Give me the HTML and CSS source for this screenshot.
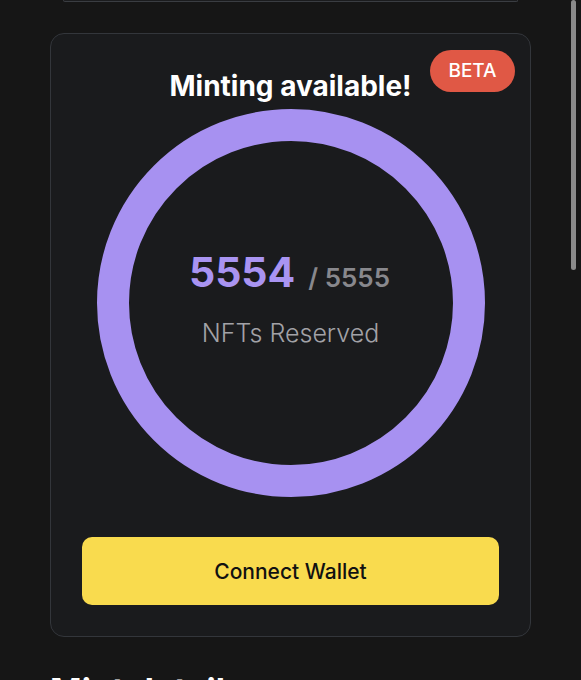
FILE: index.html
```html
<!DOCTYPE html>
<html>
<head>
<meta charset="utf-8">
<link rel="stylesheet" href="styles.css">
</head>
<body>
<div class="prev-card"></div>
<section class="card">
  <span class="badge">BETA</span>
  <h2 class="title">Minting available!</h2>
  <div class="ring">
    <svg class="ring-svg" width="388" height="388" viewBox="0 0 388 388">
      <circle cx="194" cy="194" r="178" fill="none" stroke="#a791f1" stroke-width="32"/>
    </svg>
    <div class="ring-text">
      <div class="count"><span class="count-main">5554</span><span class="count-total">/ 5555</span></div>
      <div class="count-label">NFTs Reserved</div>
    </div>
  </div>
  <button class="connect">Connect Wallet</button>
</section>
<h1 class="next-heading">Mint details</h1>
<div class="scrollbar"></div>
</body>
</html>
```
FILE: styles.css
```css
html, body {
  margin: 0;
  padding: 0;
  background: #161616;
  font-family: "Inter", "Lato", sans-serif;
  overflow: hidden;
}
.prev-card {
  height: 1px;
  margin: 0 63px;
  border: 1px solid #3a3d42;
  border-top: none;
  border-radius: 0 0 10px 10px;
  background: #1b1c1e;
}
.card {
  position: relative;
  margin: 31px 50px 0;
  border: 1px solid #33363b;
  border-radius: 14px;
  background: #1a1b1d;
  padding: 0 31px 31px;
  display: flex;
  flex-direction: column;
  align-items: center;
}
.badge {
  position: absolute;
  top: 16px;
  right: 15px;
  width: 85px;
  height: 42px;
  border-radius: 21px;
  background: #e05845;
  color: #fff;
  font-size: 19px;
  font-weight: 500;
  line-height: 42px;
  text-align: center;
}
.title {
  margin: 36px 0 0;
  color: #fff;
  font-size: 28px;
  font-weight: 700;
  line-height: 32px;
}
.ring {
  margin-top: 7px;
  display: grid;
  width: 388px;
  height: 388px;
}
.ring-svg, .ring-text {
  grid-area: 1 / 1;
}
.ring-text {
  display: flex;
  flex-direction: column;
  align-items: center;
  justify-content: center;
  padding-bottom: 8px;
}
.count {
  display: flex;
  align-items: baseline;
  gap: 13px;
  margin-left: -2px;
  line-height: 44px;
}
.count-main {
  color: #a994f2;
  font-size: 41px;
  font-weight: 700;
}
.count-total {
  color: #88888d;
  font-size: 26px;
  font-weight: 600;
}
.count-label {
  margin-top: 18px;
  color: #a2a2a7;
  font-size: 25px;
  font-weight: 300;
  line-height: 30px;
}
.connect {
  margin-top: 40px;
  width: 417px;
  height: 68px;
  border: none;
  border-radius: 10px;
  background: #f9db4e;
  color: #111;
  font-family: inherit;
  font-size: 21px;
  font-weight: 500;
}
.next-heading {
  margin: 34px 50px 0;
  color: #fff;
  font-size: 34px;
  font-weight: 700;
  line-height: 40px;
}
.scrollbar {
  position: fixed;
  top: 0;
  right: 5px;
  width: 5px;
  height: 270px;
  border-radius: 3px;
  background: #8a8a8a;
}
```
